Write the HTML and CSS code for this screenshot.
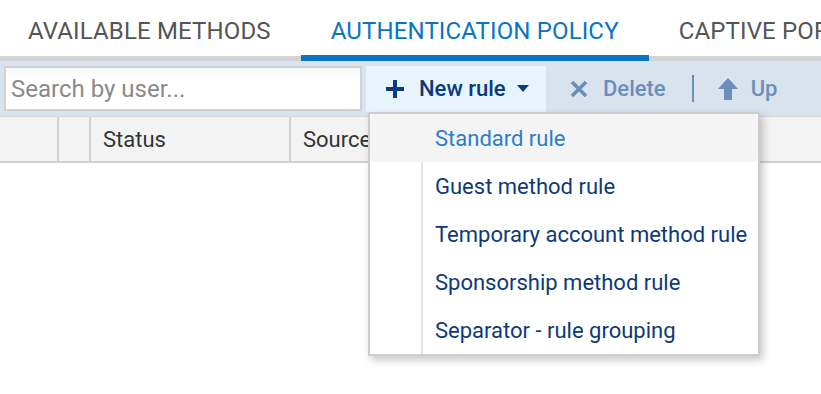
FILE: index.html
```html
<!DOCTYPE html>
<html lang="en">
<head>
<meta charset="UTF-8" />
<meta name="viewport" content="width=device-width, initial-scale=1" />
<title>Authentication policy</title>
<link rel="stylesheet" href="styles.css">
</head>
<body>

<div class="tabs">
  <div class="tab first">AVAILABLE METHODS</div>
  <div class="tab active">AUTHENTICATION POLICY</div>
  <div class="tab">CAPTIVE PORTAL</div>
</div>

<div class="toolbar">
  <input type="text" class="search" placeholder="Search by user..." />

  <div class="new-rule-wrap">
    <button class="btn btn-new">
      <svg class="ico-plus" width="20" height="20" viewBox="0 0 20 20">
        <path d="M10 1v18M1 10h18" stroke="#0b3a7e" stroke-width="4" fill="none"/>
      </svg>
      <span>New rule</span>
      <svg class="ico-caret" width="12" height="7" viewBox="0 0 12 7">
        <path d="M0 0h12L6 7z" fill="#0b3a7e"/>
      </svg>
    </button>

    <ul class="menu">
      <li class="menu-item hover"><span>Standard rule</span></li>
      <li class="menu-item"><span>Guest method rule</span></li>
      <li class="menu-item"><span>Temporary account method rule</span></li>
      <li class="menu-item"><span>Sponsorship method rule</span></li>
      <li class="menu-item"><span>Separator - rule grouping</span></li>
    </ul>
  </div>

  <button class="btn btn-off btn-delete">
    <svg width="18" height="18" viewBox="0 0 18 18">
      <path d="M2 2l14 14M16 2L2 16" stroke="#6b8ebc" stroke-width="3.6" fill="none"/>
    </svg>
    <span>Delete</span>
  </button>
  <div class="sep"></div>
  <button class="btn btn-off btn-up">
    <svg width="20" height="22" viewBox="0 0 20 22">
      <path d="M10 0L20 11H14V22H6V11H0z" fill="#6b8ebc"/>
    </svg>
    <span>Up</span>
  </button>
</div>

<div class="grid-head">
  <div class="cell c1"></div>
  <div class="cell c2"></div>
  <div class="cell c3">Status</div>
  <div class="cell c4">Source</div>
</div>

</body>
</html>
```

FILE: styles.css
```css
html, body {
  margin: 0;
  min-height: 394px;
}
body {
  font-family: Roboto, "Liberation Sans", sans-serif;
  background: #fff;
  color: #333;
}

/* Tabs */
.tabs {
  display: flex;
  height: 61px;
  box-shadow: inset 0 -5px 0 #d3d3d3;
  white-space: nowrap;
  overflow: hidden;
}
.tab {
  padding: 0 30px;
  font-size: 24px;
  letter-spacing: 0.14px;
  line-height: 62px;
  color: #555;
  border-bottom: 6px solid transparent;
  height: 55px;
  flex-shrink: 0;
}
.tab.first {
  padding-left: 28px;
}
.tab.active {
  color: #0a74c2;
  border-bottom-color: #0a74c2;
}

/* Toolbar */
.toolbar {
  display: flex;
  align-items: center;
  height: 55px;
  background: #d9e3ee;
  position: relative;
  z-index: 2;
}
.search {
  margin-left: 4px;
  width: 358px;
  height: 45px;
  box-sizing: border-box;
  border: 2px solid #cfd1d3;
  padding: 0 5px;
  font-family: inherit;
  font-size: 24px;
  background: linear-gradient(#f6f7f6, #fff 30%);
  outline: none;
}
.search::placeholder {
  color: #8a8a8a;
}
.btn {
  display: flex;
  align-items: center;
  border: none;
  background: none;
  font-family: inherit;
  font-size: 22px;
  font-weight: 500;
  padding: 0;
  cursor: pointer;
}
.new-rule-wrap {
  position: relative;
  margin-left: 4px;
}
.btn-new {
  width: 180px;
  height: 46px;
  background: #e8f4fb;
  color: #0b3a7e;
  padding-left: 19px;
}
.btn-new .ico-plus {
  margin-right: 14px;
}
.btn-new .ico-caret {
  margin-left: 11px;
}
.btn-off {
  color: #6b8ebc;
  cursor: default;
}
.btn-delete {
  margin-left: 24px;
}
.btn-delete svg {
  margin-right: 15px;
}
.sep {
  width: 2px;
  height: 27px;
  background: #6b8ebc;
  margin: 0 24px 0 26px;
}
.btn-up svg {
  margin-right: 13px;
}

/* Dropdown menu */
.menu {
  position: absolute;
  top: 100%;
  left: 2px;
  width: 392px;
  box-sizing: border-box;
  margin: 0;
  padding: 0;
  list-style: none;
  background: #fff;
  border: 2px solid #cdcdcd;
  box-shadow: 3px 4px 8px rgba(0, 0, 0, 0.22);
}
.menu-item {
  height: 48px;
  padding-left: 51px;
  font-size: 22px;
  color: #0d3a7a;
}
.menu-item span {
  display: block;
  height: 48px;
  box-sizing: border-box;
  padding-top: 2px;
  line-height: 46px;
  border-left: 2px solid #e2e2e2;
  padding-left: 12px;
  white-space: nowrap;
}
.menu-item.hover {
  background: #f4f4f4;
  border-radius: 5px;
  color: #2a7fc6;
}
.menu-item.hover span {
  border-left-color: transparent;
}

/* Grid header */
.grid-head {
  display: flex;
  height: 44px;
  background: #f3f3f3;
  border-top: 1px solid #d8d8d8;
  border-bottom: 2px solid #d0d0d0;
}
.cell {
  font-size: 22px;
  line-height: 46px;
  color: #333;
  padding-left: 12px;
  box-sizing: border-box;
  border-right: 2px solid #d0d0d0;
  white-space: nowrap;
}
.c1 {
  width: 59px;
}
.c2 {
  width: 32px;
}
.c3 {
  width: 200px;
}
.c4 {
  flex: 1;
  border-right: none;
}
```
